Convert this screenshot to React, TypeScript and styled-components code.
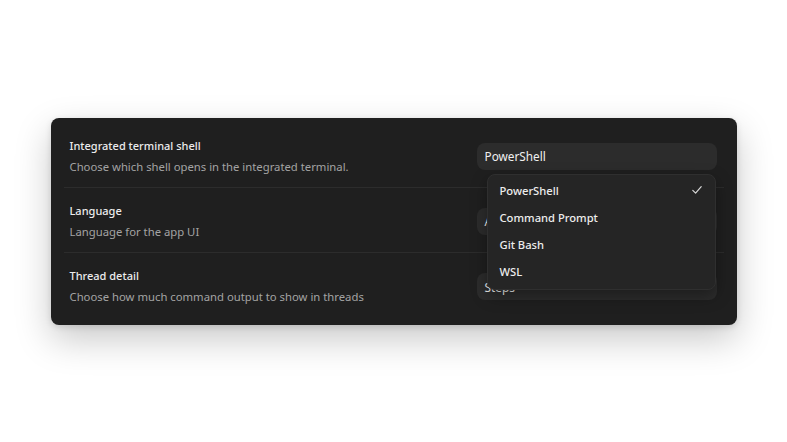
import React from "react";
import styled, { createGlobalStyle } from "styled-components";

const GlobalStyle = createGlobalStyle`
  html, body {
    margin: 0;
    padding: 0;
    background: #ffffff;
  }
  body {
    font-family: "Noto Sans", "Open Sans", sans-serif;
    -webkit-font-smoothing: antialiased;
  }
`;

const Page = styled.div`
  min-height: 100vh;
  display: flex;
  align-items: center;
  justify-content: center;
`;

const Panel = styled.section`
  width: 686px;
  box-sizing: border-box;
  padding: 5px 13px 7px;
  background: #1f1f1f;
  border-radius: 8px;
  box-shadow: 0 14px 36px rgba(0, 0, 0, 0.22), 0 2px 6px rgba(0, 0, 0, 0.12);
  display: flex;
  flex-direction: column;
`;

const Row = styled.div<{ $last?: boolean }>`
  position: relative;
  height: 65px;
  box-sizing: border-box;
  padding: 3px 7px 0 6px;
  display: flex;
  align-items: center;
  justify-content: space-between;
  border-bottom: ${(p) => (p.$last ? "none" : "1px solid #2c2c2c")};
`;

const Text = styled.div`
  display: flex;
  flex-direction: column;
  gap: 5px;
`;

const Title = styled.div`
  font-size: 11px;
  font-weight: 500;
  color: #ececec;
  line-height: 16px;
`;

const Desc = styled.div`
  font-size: 11.3px;
  color: #a3a3a3;
  line-height: 16px;
`;

const SelectButton = styled.div`
  width: 240px;
  height: 27px;
  box-sizing: border-box;
  padding: 0 8px;
  border-radius: 8px;
  background: #2c2c2c;
  color: #f0f0f0;
  font-size: 11.8px;
  display: flex;
  align-items: center;
`;

const Menu = styled.ul`
  position: absolute;
  top: 51px;
  right: 8px;
  width: 229px;
  margin: 0;
  padding: 2px 0 4px;
  box-sizing: border-box;
  list-style: none;
  background: #252525;
  border: 1px solid #2f2f2f;
  border-radius: 8px;
  box-shadow: 0 6px 16px rgba(0, 0, 0, 0.35);
  z-index: 10;
`;

const MenuItem = styled.li`
  height: 27px;
  padding: 0 12px 0 12px;
  display: flex;
  align-items: center;
  justify-content: space-between;
  font-size: 11.2px;
  font-weight: 500;
  color: #ededed;
`;

const Check = () => (
  <svg width="12" height="12" viewBox="0 0 12 12" fill="none">
    <path d="M1.8 6.4 L4.6 9.2 L10.2 2.6" stroke="#d8d8d8" strokeWidth="1.2" strokeLinecap="round" strokeLinejoin="round" />
  </svg>
);

const shells = ["PowerShell", "Command Prompt", "Git Bash", "WSL"];

export default function App() {
  const selected = "PowerShell";
  return (
    <>
      <GlobalStyle />
      <Page>
        <Panel>
          <Row>
            <Text>
              <Title>Integrated terminal shell</Title>
              <Desc>Choose which shell opens in the integrated terminal.</Desc>
            </Text>
            <SelectButton>{selected}</SelectButton>
            <Menu>
              {shells.map((s) => (
                <MenuItem key={s}>
                  {s}
                  {s === selected && <Check />}
                </MenuItem>
              ))}
            </Menu>
          </Row>
          <Row>
            <Text>
              <Title>Language</Title>
              <Desc>Language for the app UI</Desc>
            </Text>
            <SelectButton>Auto Detect</SelectButton>
          </Row>
          <Row $last>
            <Text>
              <Title>Thread detail</Title>
              <Desc>Choose how much command output to show in threads</Desc>
            </Text>
            <SelectButton>Steps</SelectButton>
          </Row>
        </Panel>
      </Page>
    </>
  );
}
